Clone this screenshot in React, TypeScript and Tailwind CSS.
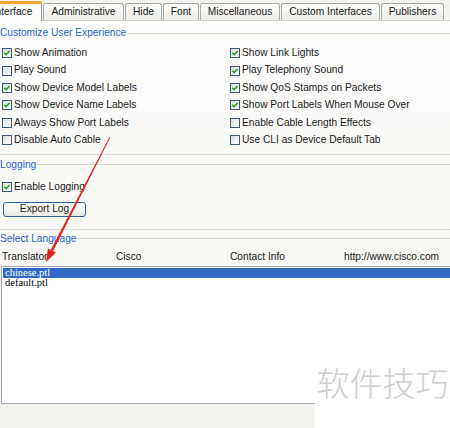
import React from "react";

const Check = ({ checked }: { checked: boolean }) => (
  <span className="w-[10px] h-[10px] border border-[#3d5a7a] bg-linear-to-br from-[#dcdcd6] to-white flex items-center justify-center shrink-0">
    {checked && (
      <svg width="8" height="8" viewBox="0 0 8 8">
        <path d="M1.3 3.7 L3.1 5.6 L6.7 1.9" stroke="#22a022" strokeWidth="1.5" fill="none" />
      </svg>
    )}
  </span>
);

const Row = ({ label, checked }: { label: string; checked: boolean }) => (
  <div className="flex items-center pl-[2px] gap-[2px] whitespace-nowrap">
    <Check checked={checked} />
    <span className="leading-none">{label}</span>
  </div>
);

const Title = ({ text }: { text: string }) => (
  <div className="h-[12px] flex items-center">
    <span className="text-[#2d62d2] pr-[1px] leading-none whitespace-nowrap">{text}</span>
    <div className="flex-1 h-[1px] bg-[#d8d7cc]" />
  </div>
);

const tabs: { label: string; w: string }[] = [
  { label: "Administrative", w: "w-[81px]" },
  { label: "Hide", w: "w-[37px]" },
  { label: "Font", w: "w-[36px]" },
  { label: "Miscellaneous", w: "w-[80px]" },
  { label: "Custom Interfaces", w: "w-[99px]" },
  { label: "Publishers", w: "w-[63px]" },
];

const left: [string, boolean][] = [
  ["Show Animation", true],
  ["Play Sound", false],
  ["Show Device Model Labels", true],
  ["Show Device Name Labels", true],
  ["Always Show Port Labels", false],
  ["Disable Auto Cable", false],
];
const right: [string, boolean][] = [
  ["Show Link Lights", true],
  ["Play Telephony Sound", true],
  ["Show QoS Stamps on Packets", true],
  ["Show Port Labels When Mouse Over", true],
  ["Enable Cable Length Effects", false],
  ["Use CLI as Device Default Tab", false],
];

export default function App() {
  const rows: React.ReactNode[] = [];
  for (let i = 0; i < 6; i++) {
    rows.push(<Row key={"l" + i} label={left[i][0]} checked={left[i][1]} />);
    rows.push(<Row key={"r" + i} label={right[i][0]} checked={right[i][1]} />);
  }
  return (
    <div
      className="w-[450px] h-[428px] relative overflow-hidden bg-[#f4f3ee] text-[10.2px] text-[#1a1a1a]"
      style={{ fontFamily: '"Liberation Sans", Arial, sans-serif' }}
    >
      {/* tab bar */}
      <div className="h-[20px] flex items-end relative">
        <div className="ml-[-17px] w-[59px] h-[20px] border border-b-0 border-[#919b9c] rounded-t-[3px] bg-[#fcfcfb] flex items-center justify-center relative z-10 mb-[-1px] pt-[1px]">
          <span className="absolute top-[-1px] left-[-1px] right-[-1px] h-[3px] bg-[#f0a333] rounded-t-[3px]" />
          <span className="leading-none">Interface</span>
        </div>
        {tabs.map((t) => (
          <div
            key={t.label}
            className={`${t.w} ml-[1px] h-[17px] border border-b-0 border-[#a3abac] rounded-t-[3px] bg-linear-to-b from-white to-[#ebeae4] flex items-center justify-center pt-[1px]`}
          >
            <span className="leading-none whitespace-nowrap">{t.label}</span>
          </div>
        ))}
      </div>
      <div className="h-[1px] bg-[#cfcfc6]" />

      {/* panel */}
      <div className="bg-linear-to-b from-[#fcfcfb] via-[#f8f8f5] to-[#f3f2ed] h-[384px] flex flex-col">
        <div className="h-[6px]" />
        <Title text="Customize User Experience" />
        <div className="grid grid-cols-[228px_1fr] auto-rows-[17.4px] mt-[5.5px]">{rows}</div>
        <div className="h-[1px] bg-[#dcdbd2] mt-[5px]" />
        <div className="h-[4px]" />
        <Title text="Logging" />
        <div className="h-[17px] mt-[8px] flex items-center">
          <Row label="Enable Logging" checked={true} />
        </div>
        <div className="mt-[6px] ml-[3px] w-[83px] h-[15px] rounded-[3px] border border-[#2f5f9e] bg-linear-to-b from-white to-[#e9e8e2] flex items-center justify-center">
          <span className="leading-none">Export Log</span>
        </div>
        <div className="h-[1px] bg-[#dcdbd2] mt-[12px]" />
        <div className="h-[3px]" />
        <Title text="Select Language" />
        <div className="grid grid-cols-[114px_114px_114px_114px] h-[17px] items-center mt-[4px] pl-[2px] whitespace-nowrap">
          <span className="leading-none">Translator</span>
          <span className="leading-none">Cisco</span>
          <span className="leading-none">Contact Info</span>
          <span className="leading-none">http://www.cisco.com</span>
        </div>
        <div
          className="ml-[1px] w-[470px] h-[138px] border border-[#a0aab5] bg-white pt-[1px] text-[10.5px] text-black"
          style={{ fontFamily: '"Liberation Serif", "Times New Roman", serif' }}
        >
          <div className="h-[10px] bg-[#316ac5] text-white ml-[1px] pl-[2px] flex items-center leading-none">chinese.ptl</div>
          <div className="h-[10px] ml-[1px] pl-[2px] flex items-center leading-none">default.ptl</div>
        </div>
      </div>

      {/* watermark */}
      <div className="absolute left-[315px] top-[362px] right-0 bottom-0 bg-white flex justify-center pt-[4px]">
        <span
          className="text-[33px] text-[#cfcfcf] leading-none whitespace-nowrap inline-block"
          style={{ fontFamily: '"Noto Sans CJK SC", sans-serif', fontWeight: 300 }}
        >
          软件技巧
        </span>
      </div>

      {/* red arrow annotation */}
      <svg className="absolute left-0 top-0 pointer-events-none" width="450" height="428" viewBox="0 0 450 428">
        <polygon points="110.4,137.2 109.6,136.8 50.8,249.8 53,251" fill="#e0231f" />
        <polygon points="46,262 47.9,248.4 55.9,252.5" fill="#e0231f" />
      </svg>
    </div>
  );
}
